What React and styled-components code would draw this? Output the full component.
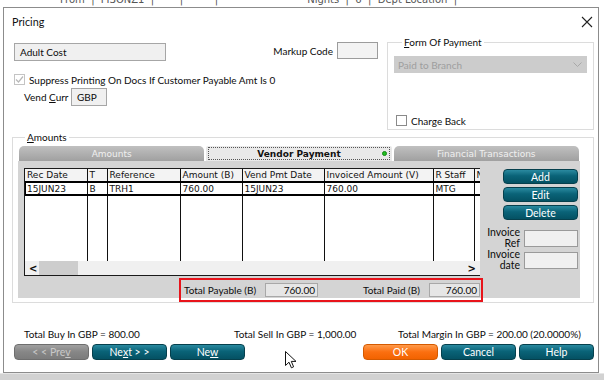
import React from "react";
import styled, { createGlobalStyle, css } from "styled-components";

const UI = `Lato, "Open Sans", sans-serif`;
const TAHOMA = `"DejaVu Sans", "Liberation Sans", sans-serif`;
const FS = "10px";

const GlobalStyle = createGlobalStyle`
  html, body { margin: 0; padding: 0; }
  body {
    width: 604px; height: 380px; overflow: hidden; background: #fff;
    font-family: ${UI}; color: #0c0c0c;
  }
  * { box-sizing: border-box; }
`;

const Desktop = styled.div`
  position: relative;
  width: 604px; height: 380px; overflow: hidden;
  display: flex; flex-direction: column;
  background: #fff;
`;

const BackStrip = styled.div`
  height: 7px; overflow: hidden; flex: none;
  font: 10px ${TAHOMA}; color: #555; white-space: pre;
  padding-left: 60px;
  & > span { display: block; margin-top: -6px; }
`;

const Middle = styled.div`
  display: flex; flex: none; height: 366px;
  padding-left: 3px;
`;

const BottomBar = styled.div`
  flex: 1;
  background: #d2d2d2;
  border-top: 1px solid #e6e6e6;
`;

const Dialog = styled.div`
  width: 596px; height: 366px;
  border: 1px solid #8c8c8c;
  background: #fff;
  display: flex; flex-direction: column;
  overflow: hidden;
`;

const TitleBar = styled.div`
  height: 25px; flex: none;
  display: flex; align-items: center; justify-content: space-between;
  padding: 2px 5px 0 8px;
  font: 10.8px ${UI}; color: #111;
`;

const Body = styled.div`
  padding: 2px 4px 0 8px;
  display: flex; flex-direction: column;
  font: ${FS}/14px ${UI};
`;

const TopSection = styled.div`
  display: grid;
  grid-template-columns: 1fr 207px;
  column-gap: 9px;
  align-items: start;
`;

const LeftCol = styled.div`
  padding: 7px 0 0 2px;
  display: flex; flex-direction: column;
`;

const Row = styled.div`
  display: flex; align-items: center;
  height: ${(p) => (p.$h ? `${p.$h}px` : "auto")};
  margin-top: ${(p) => p.$mt || 0}px;
  padding-left: ${(p) => p.$pl || 0}px;
`;

const TextBox = styled.div`
  width: ${(p) => p.$w}px; height: ${(p) => p.$h || 17}px;
  margin-top: ${(p) => p.$mt || 0}px;
  margin-left: ${(p) => p.$ml || 0}px;
  background: ${(p) => p.$bg || "#f0f0f0"};
  border: 1px solid ${(p) => p.$bc || "#a6a6a6"};
  display: flex; align-items: center;
  justify-content: ${(p) => (p.$right ? "flex-end" : "flex-start")};
  padding: 0 ${(p) => (p.$right ? 2 : 4)}px 0 ${(p) => p.$pl ?? 4}px;
  font: ${FS} ${UI};
  color: #0c0c0c; flex: none;
`;

const Label = styled.span`
  margin-left: ${(p) => p.$ml || 0}px;
  margin-right: ${(p) => p.$mr || 0}px;
  width: ${(p) => (p.$w ? `${p.$w}px` : "auto")};
  flex: none;
  color: ${(p) => p.$c || "#0c0c0c"};
  white-space: nowrap;
`;

const Spacer = styled.div` flex: 1; `;

const CheckBox = styled.span`
  width: 11px; height: 11px; flex: none;
  border: 1px solid ${(p) => (p.$disabled ? "#c4c4c4" : "#8a8a8a")};
  background: #fff;
  display: inline-flex; align-items: center; justify-content: center;
  margin-right: 4px;
`;

const Fieldset = styled.fieldset`
  margin: ${(p) => p.$mt || 0}px 0 0 0;
  padding: ${(p) => p.$pad};
  border: 1px solid #dcdcdc;
  min-width: 0;
  display: flex; flex-direction: column;
`;

const Legend = styled.legend`
  padding: 0 2px;
  height: 14px;
  margin-left: ${(p) => p.$ml || 7}px;
  font: ${FS}/14px ${UI}; color: #0c0c0c;
  & u { text-decoration: underline; }
`;

const SelectBox = styled.div`
  height: 17px; width: 193px;
  background: #cccccc;
  display: flex; align-items: center; justify-content: space-between;
  padding: 0 5px 0 4px;
  color: #9e9e9e;
`;

/* ---- Amounts tab panel ---- */
const TabStrip = styled.div`
  height: 16px; display: flex; gap: 2px; padding: 0 1px;
  align-items: flex-end;
`;

const Tab = styled.div`
  flex: 1; position: relative;
  height: 15px;
  border-radius: 5px 5px 0 0;
  display: flex; align-items: center; justify-content: center;
  font: ${(p) => (p.$active ? "bold" : "normal")} 9px ${TAHOMA};
  ${(p) =>
    p.$active
      ? css`
          background: #e9e9e9;
          color: #111;
          border-radius: 2px 2px 0 0;
          &::before {
            content: ""; position: absolute; inset: 1px 2px 1px 2px;
            border: 1px dotted #555;
          }
        `
      : css`
          background: linear-gradient(#c0c0c0, #a0a0a0);
          color: #f0f0f0;
        `}
`;

const Dot = styled.span`
  position: absolute; right: 5px; top: 5px;
  width: 5px; height: 5px; border-radius: 50%;
  background: #20c020; border: 1px solid #118811;
`;

const PanelBody = styled.div`
  height: 137px;
  background: #d4d4d4;
  display: grid;
  grid-template-columns: 456px 1fr;
  grid-template-rows: 108px auto;
  padding: 7px 2px 0 6px;
`;

const GridBox = styled.div`
  border: 1px solid #1a1a1a;
  border-right: none;
  background: #fff;
  display: flex; flex-direction: column;
  overflow: hidden;
`;

const Table = styled.table`
  border-collapse: collapse; table-layout: fixed;
  width: 456px; flex: 1;
  font: 9px ${TAHOMA}; color: #111;
`;

const Th = styled.th`
  height: 13px; padding: 0 2px; text-align: left; font-weight: normal;
  background: #f3f3f3;
  border-right: 1px solid #111;
  border-bottom: 1px solid #111;
  white-space: nowrap; overflow: hidden; text-overflow: clip;
`;

const Td = styled.td`
  height: ${(p) => (p.$fill ? "auto" : "13px")};
  padding: 0 2px; white-space: nowrap; overflow: hidden;
  border-right: 1px solid #111;
`;

const SelRow = styled.tr`
  outline: 2px solid #000; outline-offset: -1px;
`;

const HScroll = styled.div`
  height: 14px; flex: none;
  background: #f0f0f0;
  display: flex; align-items: center;
  font: bold 10px ${TAHOMA}; color: #333;
`;

const Thumb = styled.div`
  width: 39px; height: 14px; background: #cdcdcd; margin-left: 2px;
`;

const SideCol = styled.div`
  display: flex; flex-direction: column; align-items: flex-end;
  padding-top: 1px;
`;

const tealBtn = css`
  background: linear-gradient(#2a8aa0, #0a6378 45%, #045163);
  border: 1px solid #06404d;
  color: #fff;
`;

const Btn = styled.div`
  width: ${(p) => p.$w || 75}px; height: ${(p) => p.$h || 15}px;
  border-radius: 4px; flex: none;
  display: flex; align-items: center; justify-content: center;
  font: 10.5px ${UI};
  margin-top: ${(p) => p.$mt || 0}px;
  ${(p) =>
    p.$kind === "orange"
      ? css`
          background: linear-gradient(#ff9a4a, #fb6f10 50%, #f26300);
          border: 1px solid #d45a00; color: #fff;
        `
      : p.$kind === "grey"
      ? css`
          background: linear-gradient(#a0a0a0, #868686 50%, #7c7c7c);
          border: 1px solid #6e6e6e; color: #c9c9c9;
        `
      : tealBtn}
  & u { text-decoration: underline; }
`;

const InvRow = styled.div`
  display: flex; align-items: flex-start; height: 22px;
  margin-top: ${(p) => p.$mt || 0}px;
`;

const InvLabel = styled.div`
  font: 10.5px/11px ${UI}; text-align: right;
  margin-right: 4px;
`;

const TotalsBox = styled.div`
  grid-column: 1 / -1;
  margin: 2px 0 0 155px;
  width: 304px; height: 24px;
  border: 2px solid #e8141b;
  display: flex; align-items: center;
  font: ${FS} ${UI};
  position: relative; z-index: 1;
`;

const FooterTotals = styled.div`
  display: grid;
  grid-template-columns: 210px 164px auto;
  padding-left: 12px;
  margin-top: 24px;
  height: 14px;
  line-height: 14px;
  white-space: nowrap;
`;

const ButtonRow = styled.div`
  display: flex; justify-content: space-between;
  padding-left: 2px;
  margin-top: 3px;
`;

const BtnGroup = styled.div`
  display: flex; gap: ${(p) => p.$gap || 4}px;
`;

const Cursor = styled.svg`
  position: absolute; left: 285px; top: 351px;
`;

const columns = [
  ["Rec Date", 62],
  ["T", 20],
  ["Reference", 73],
  ["Amount (B)", 62],
  ["Vend Pmt Date", 82],
  ["Invoiced Amount (V)", 109],
  ["R Staff", 41],
  ["N", 7],
];
const row = ["15JUN23", "B", "TRH1", "760.00", "15JUN23", "760.00", "MTG", ""];

export default function App() {
  return (
    <Desktop>
      <GlobalStyle />
      <BackStrip>
        <span>From  |  FISONZ1  |        |          |                            Nights  |  6  |  Dept Location  |</span>
      </BackStrip>
      <Middle>
        <Dialog>
          <TitleBar>
            <span>Pricing</span>
            <svg width="12" height="12" viewBox="0 0 12 12">
              <path d="M1 1 L11 11 M11 1 L1 11" stroke="#222" strokeWidth="1.1" fill="none" />
            </svg>
          </TitleBar>
          <Body>
            <TopSection>
              <LeftCol>
                <Row style={{ alignItems: "flex-start" }}>
                  <TextBox $w={152} $h={18} $mt={1} $pl={5}>Adult Cost</TextBox>
                  <Spacer />
                  <Label $mr={4} style={{ lineHeight: "17px", marginTop: 1 }}>Markup Code</Label>
                  <TextBox $w={41} $h={17} $bg="#f3f3f3" $bc="#9c9c9c" />
                </Row>
                <Row $mt={13} $h={11}>
                  <CheckBox $disabled>
                    <svg width="9" height="9" viewBox="0 0 9 9">
                      <path d="M1 4.5 L3.5 7 L8 1.5" stroke="#b8b8b8" strokeWidth="1.2" fill="none" />
                    </svg>
                  </CheckBox>
                  <Label>Suppress Printing On Docs If Customer Payable Amt Is 0</Label>
                </Row>
                <Row $mt={3} $pl={10}>
                  <Label $w={47}>Vend <u>C</u>urr</Label>
                  <TextBox $w={36} $h={18} $pl={5}>GBP</TextBox>
                </Row>
              </LeftCol>
              <Fieldset $pad="7px 6px 3px 6px">
                <Legend $ml={8}><u>F</u>orm Of Payment</Legend>
                <SelectBox>
                  <span>Paid to Branch</span>
                  <svg width="9" height="6" viewBox="0 0 9 6">
                    <path d="M0.5 0.5 L4.5 4.5 L8.5 0.5" stroke="#a8a8a8" strokeWidth="1" fill="none" />
                  </svg>
                </SelectBox>
                <Row $mt={42} $pl={2} $h={11}>
                  <CheckBox />
                  <Label>Charge Back</Label>
                </Row>
              </Fieldset>
            </TopSection>

            <Fieldset $mt={0} $pad="1px 13px 4px 5px">
              <Legend $ml={7}><u>A</u>mounts</Legend>
              <TabStrip>
                <Tab>Amounts</Tab>
                <Tab $active>Vendor Payment<Dot /></Tab>
                <Tab>Financial Transactions</Tab>
              </TabStrip>
              <PanelBody>
                <GridBox>
                  <Table>
                    <colgroup>
                      {columns.map(([n, w]) => (
                        <col key={n} style={{ width: w }} />
                      ))}
                    </colgroup>
                    <thead>
                      <tr>
                        {columns.map(([n]) => (
                          <Th key={n}>{n}</Th>
                        ))}
                      </tr>
                    </thead>
                    <tbody>
                      <SelRow>
                        {row.map((v, i) => (
                          <Td key={i}>{v}</Td>
                        ))}
                      </SelRow>
                      <tr>
                        {row.map((_, i) => (
                          <Td key={i} $fill />
                        ))}
                      </tr>
                    </tbody>
                  </Table>
                  <HScroll>
                    <Label $ml={4}>&lt;</Label>
                    <Thumb />
                    <Spacer />
                    <Label $mr={4}>&gt;</Label>
                  </HScroll>
                </GridBox>
                <SideCol>
                  <Btn>Add</Btn>
                  <Btn $mt={3}>Edit</Btn>
                  <Btn $mt={3}>Delete</Btn>
                  <InvRow $mt={7}>
                    <InvLabel>Invoice<br />Ref</InvLabel>
                    <TextBox $w={54} $h={17} $mt={3} $bc="#9a9a9a" />
                  </InvRow>
                  <InvRow>
                    <InvLabel>Invoice<br />date</InvLabel>
                    <TextBox $w={54} $h={17} $mt={3} $bc="#9a9a9a" />
                  </InvRow>
                </SideCol>
                <TotalsBox>
                  <Label $ml={3} $w={81}>Total Payable (B)</Label>
                  <TextBox $w={53} $h={14} $right $bg="#e6e6e6" $bc="#a8a8a8">760.00</TextBox>
                  <Label $ml={45} $w={66}>Total Paid (B)</Label>
                  <TextBox $w={51} $h={14} $right $bg="#e6e6e6" $bc="#a8a8a8">760.00</TextBox>
                </TotalsBox>
              </PanelBody>
            </Fieldset>

            <FooterTotals>
              <span>Total Buy In GBP = 800.00</span>
              <span>Total Sell In GBP = 1,000.00</span>
              <span>Total Margin In GBP = 200.00 (20.0000%)</span>
            </FooterTotals>
            <ButtonRow>
              <BtnGroup $gap={3}>
                <Btn $kind="grey" $h={16}>&lt; &lt; Pre<u>v</u></Btn>
                <Btn $h={16}>Ne<u>x</u>t &gt; &gt;</Btn>
                <Btn $h={16}>Ne<u>w</u></Btn>
              </BtnGroup>
              <BtnGroup $gap={3}>
                <Btn $kind="orange" $h={16}>OK</Btn>
                <Btn $h={16}>Cancel</Btn>
                <Btn $h={16}>Help</Btn>
              </BtnGroup>
            </ButtonRow>
          </Body>
        </Dialog>
      </Middle>
      <BottomBar />
      <Cursor width="12" height="18" viewBox="0 0 12 18">
        <path d="M0.5 0.5 L0.5 14.5 L4 11.2 L6.4 16.8 L8.6 15.8 L6.3 10.4 L11 10.4 Z" fill="#fff" stroke="#111" strokeWidth="1" strokeLinejoin="round" />
      </Cursor>
    </Desktop>
  );
}
